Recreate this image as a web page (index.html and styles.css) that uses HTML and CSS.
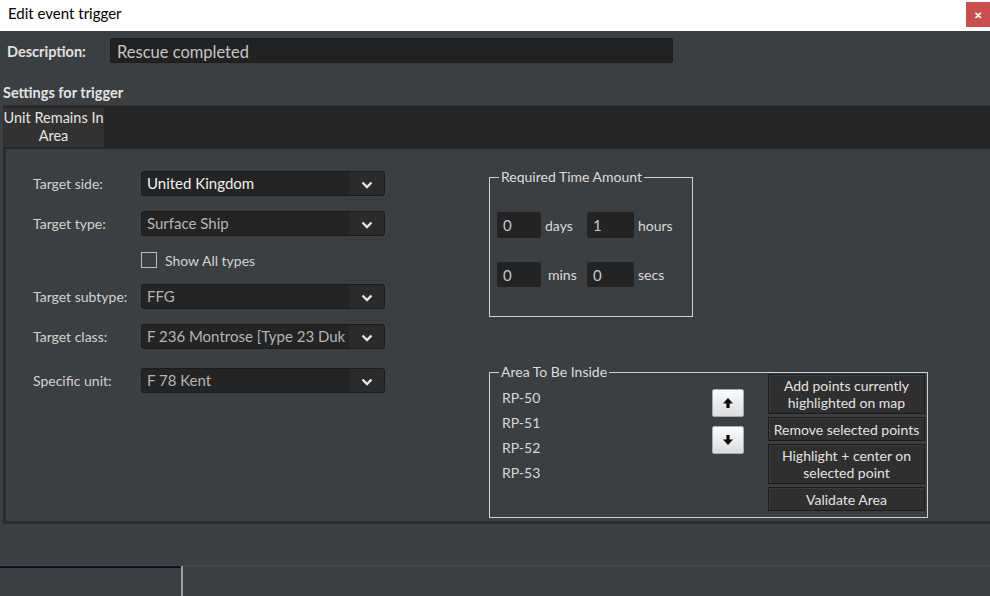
FILE: index.html
```html
<!DOCTYPE html>
<html lang="en">
<head>
<meta charset="UTF-8" />
<title>Edit event trigger</title>
<link rel="stylesheet" href="styles.css">
</head>
<body>
<div class="titlebar">
  <span class="title">Edit event trigger</span>
  <button class="close">&#x2715;</button>
</div>

<div class="dialog">
  <div class="desc-row">
    <label class="desc-label">Description:</label>
    <div class="desc-input">Rescue completed</div>
  </div>

  <div class="section-title">Settings for trigger</div>

  <div class="tabstrip">
    <div class="tab">Unit Remains In<br>Area</div>
  </div>

  <div class="panel">
    <div class="form">
      <div class="row">
        <span class="lbl">Target side:</span>
        <div class="select bright">
          <span class="val">United Kingdom</span>
          <span class="drop"><svg width="12" height="8" viewBox="0 0 12 8"><path d="M1.5 1.5 L6 6 L10.5 1.5" fill="none" stroke="#e6e6e6" stroke-width="2.4"/></svg></span>
        </div>
      </div>
      <div class="row">
        <span class="lbl">Target type:</span>
        <div class="select">
          <span class="val">Surface Ship</span>
          <span class="drop"><svg width="12" height="8" viewBox="0 0 12 8"><path d="M1.5 1.5 L6 6 L10.5 1.5" fill="none" stroke="#e6e6e6" stroke-width="2.4"/></svg></span>
        </div>
      </div>
      <div class="row check-row">
        <span class="lbl"></span>
        <span class="checkbox"></span>
        <span class="check-text">Show All types</span>
      </div>
      <div class="row">
        <span class="lbl">Target subtype:</span>
        <div class="select">
          <span class="val">FFG</span>
          <span class="drop"><svg width="12" height="8" viewBox="0 0 12 8"><path d="M1.5 1.5 L6 6 L10.5 1.5" fill="none" stroke="#e6e6e6" stroke-width="2.4"/></svg></span>
        </div>
      </div>
      <div class="row">
        <span class="lbl">Target class:</span>
        <div class="select">
          <span class="val">F 236 Montrose [Type 23 Duk</span>
          <span class="drop"><svg width="12" height="8" viewBox="0 0 12 8"><path d="M1.5 1.5 L6 6 L10.5 1.5" fill="none" stroke="#e6e6e6" stroke-width="2.4"/></svg></span>
        </div>
      </div>
      <div class="row last">
        <span class="lbl">Specific unit:</span>
        <div class="select">
          <span class="val">F 78 Kent</span>
          <span class="drop"><svg width="12" height="8" viewBox="0 0 12 8"><path d="M1.5 1.5 L6 6 L10.5 1.5" fill="none" stroke="#e6e6e6" stroke-width="2.4"/></svg></span>
        </div>
      </div>
    </div>

    <div class="right">
      <div class="group time">
        <div class="group-title">Required Time Amount</div>
        <div class="time-grid">
          <div class="num">0</div><span class="unit">days</span>
          <div class="num">1</div><span class="unit">hours</span>
          <div class="num">0</div><span class="unit wide">mins</span>
          <div class="num">0</div><span class="unit">secs</span>
        </div>
      </div>

      <div class="group area">
        <div class="area-left">
          <div class="group-title">Area To Be Inside</div>
          <ul class="points">
            <li>RP-50</li>
            <li>RP-51</li>
            <li>RP-52</li>
            <li>RP-53</li>
          </ul>
        </div>
        <div class="arrows">
          <button class="arrow"><svg width="12" height="12" viewBox="0 0 12 12"><polygon points="6,1 11,6.5 7.6,6.5 7.6,11 4.4,11 4.4,6.5 1,6.5" fill="#0a0a0a"/></svg></button>
          <button class="arrow"><svg width="12" height="12" viewBox="0 0 12 12"><polygon points="6,11 11,5.5 7.6,5.5 7.6,1 4.4,1 4.4,5.5 1,5.5" fill="#0a0a0a"/></svg></button>
        </div>
        <div class="actions">
          <button class="act tall">Add points currently<br>highlighted on map</button>
          <button class="act">Remove selected points</button>
          <button class="act tall">Highlight + center on<br>selected point</button>
          <button class="act">Validate Area</button>
        </div>
      </div>
    </div>
  </div>

  <div class="footer"></div>
  <div class="statusbar">
    <div class="status-left"></div>
    <div class="status-rest"></div>
  </div>
</div>
</body>
</html>
```

FILE: styles.css
```css
* {
box-sizing: border-box;
}

body {
margin: 0;
width: 990px;
height: 596px;
overflow: hidden;
background: #3c3f42;
font-family: "Lato", "Liberation Sans", sans-serif;
font-size: 14px;
color: #d4d4d4;
}

button {
font-family: inherit;
}

.titlebar {
height: 31px;
background: #fff;
display: flex;
align-items: flex-start;
justify-content: space-between;
}

.title {
color: #000;
font-size: 15px;
margin: 4px 0 0 8px;
}

.close {
width: 24px;
height: 25px;
margin-top: 2px;
border: none;
background: #c9504f;
color: #fff;
font-size: 10px;
font-weight: bold;
padding: 0;
}

.desc-row {
display: flex;
align-items: center;
padding: 7px 0 0 7px;
}

.desc-label {
width: 103px;
font-weight: bold;
font-size: 14.5px;
color: #e0e0e0;
padding-top: 1px;
}

.desc-input {
width: 563px;
height: 25px;
background: #222222;
border: 1px solid #1c1c1c;
border-radius: 2px;
padding: 2px 0 0 6px;
font-size: 16.5px;
line-height: 22px;
color: #c6c6c6;
}

.section-title {
margin: 21px 0 0 3px;
line-height: 18px;
font-weight: bold;
font-size: 14.5px;
color: #e4e4e4;
}

.tabstrip {
margin: 3px 0 0 3px;
height: 44px;
background: #262626;
border-top: 1px solid #2e3033;
padding-top: 2px;
}

.tab {
width: 101px;
height: 39px;
background: #323232;
text-align: center;
line-height: 18px;
padding-top: 1px;
font-size: 14.5px;
color: #e6e6e6;
}

.panel {
margin-left: 3px;
height: 375px;
border-left: 3px solid #2a2c2e;
border-bottom: 3px solid #2a2c2e;
display: flex;
}

/* left form */
.form {
padding: 22px 0 0 27px;
display: flex;
flex-direction: column;
gap: 15px;
}

.row {
display: flex;
align-items: center;
height: 25px;
}

.row.check-row {
height: 18px;
}

.row.last {
margin-top: 4px;
}

.lbl {
width: 108px;
color: #d2d2d2;
}

.select {
width: 244px;
height: 25px;
display: flex;
background: #242424;
border: 1px solid #1b1b1b;
border-radius: 3px;
overflow: hidden;
}

.select .val {
flex: 1;
padding-left: 5px;
font-size: 15px;
line-height: 23px;
color: #b4b4b4;
white-space: nowrap;
overflow: hidden;
}

.select.bright .val {
color: #f0f0f0;
}

.drop {
width: 36px;
flex: none;
display: flex;
align-items: center;
justify-content: center;
background: #2b2b2b;
border-left: 1px solid #222;
padding-top: 3px;
}

.checkbox {
width: 16px;
height: 16px;
border: 1px solid #bdbdbd;
margin-right: 8px;
}

.check-text {
color: #d2d2d2;
}

/* right side groups */
.right {
margin-left: 104px;
padding-top: 28px;
}

.group {
border: 1px solid #cfd0d1;
}

.group-title {
width: fit-content;
margin: -10px 0 0 9px;
padding: 0 2px;
line-height: 18px;
background: #3c3f42;
color: #dcdcdc;
}

.time {
width: 204px;
height: 140px;
}

.time-grid {
margin: 26px 0 0 7px;
display: grid;
grid-template-columns: 44px 46px 47px auto;
grid-template-rows: 26px 25px;
row-gap: 24px;
align-items: center;
}

.num {
height: 100%;
background: #232323;
border-radius: 2px;
padding-left: 6px;
font-size: 15px;
line-height: 26px;
color: #c8c8c8;
}

.unit {
padding-left: 4px;
color: #dadada;
}

.unit.wide {
padding-left: 7px;
}

.area {
margin-top: 55px;
width: 439px;
height: 146px;
display: flex;
}

.area-left {
width: 215px;
}

.points {
list-style: none;
margin: 4px 0 0 7px;
padding: 0;
}

.points li {
height: 25px;
line-height: 25px;
padding-left: 5px;
color: #d8d8d8;
}

.arrows {
margin-left: 7px;
padding-top: 16px;
display: flex;
flex-direction: column;
gap: 9px;
}

.arrow {
width: 32px;
height: 28px;
padding: 0;
border: 1px solid #a9a9a9;
border-radius: 2px;
background: linear-gradient(#fbfbfb, #dcdcdc);
display: flex;
align-items: center;
justify-content: center;
}

.actions {
margin-left: 24px;
padding-top: 1px;
width: 157px;
display: flex;
flex-direction: column;
gap: 3px;
}

.act {
height: 24px;
padding: 0;
background: #2f2f2f;
border: 1px solid #1c1c1c;
box-shadow: inset 1px 1px 0 #3a3a3a;
color: #e2e2e2;
font-size: 14px;
line-height: 17px;
white-space: nowrap;
}

.act.tall {
height: 40px;
}

.footer {
height: 41px;
}

.statusbar {
display: flex;
height: 31px;
border-top: 1px solid #45484b;
}

.status-left {
width: 181px;
border-top: 2px solid #0c1322;
}

.status-rest {
flex: 1;
border-left: 2px solid #9c9c9c;
}
```
